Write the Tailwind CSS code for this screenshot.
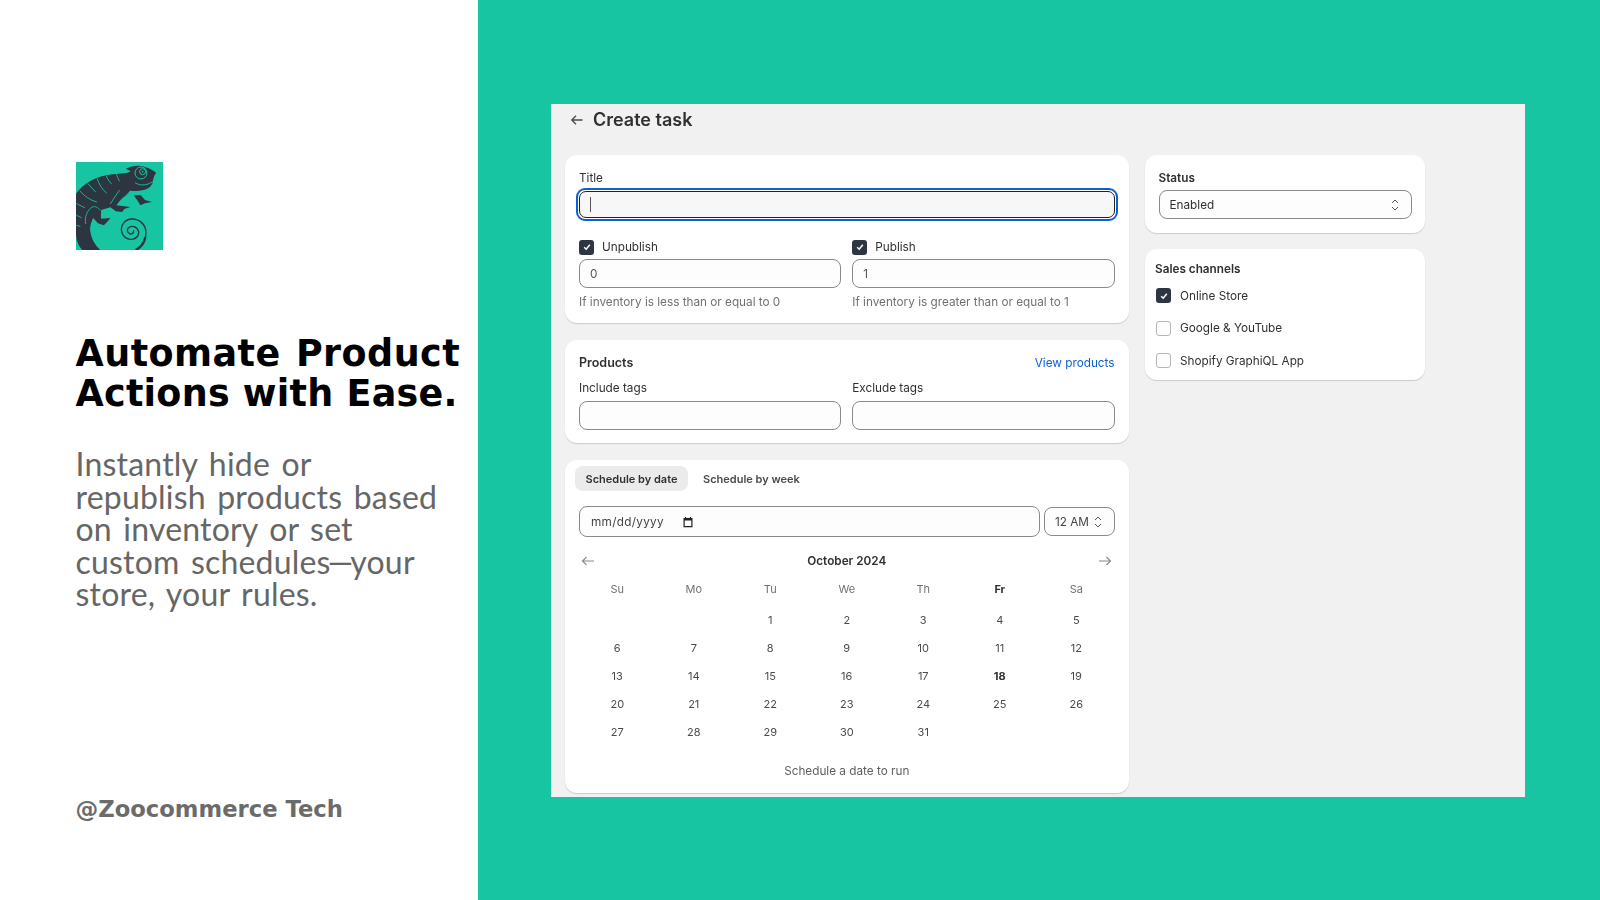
<!DOCTYPE html>
<html><head><meta charset="utf-8"><script src="https://cdn.jsdelivr.net/npm/@tailwindcss/browser@4"></script></head>
<body class="m-0">
<div class="flex w-[1600px] h-[900px] overflow-hidden font-['Inter',sans-serif] bg-white">
  <aside class="w-[477.5px] shrink-0 bg-white pl-[75.5px] flex flex-col">
    <svg class="mt-[162px] w-[87.5px] h-[88px] shrink-0" viewBox="0 0 264 264" preserveAspectRatio="none">
      <rect width="264" height="264" fill="#17c5a3"/>
      <path fill="#2d3540" d="M0 95C22 65 60 42 110 37L146 34C154 33 160 31 165 28L150 20C165 13 180 10 195 12C213 14 230 24 242 32C236 40 232 50 232 60C228 72 220 80 204 84C190 88 176 88 164 86C158 96 146 106 134 114L122 130L164 135L146 141L139 150L120 148L104 136L76 144C76 152 74 162 76 170L104 168L94 180L84 190L66 184L52 168C46 180 40 196 44 212C48 234 60 252 74 264L19 264C6 250 0 232 0 215Z"/>
      <path fill="#2d3540" d="M174 100L196 100L208 114L229 120L208 124L194 130L186 116Z"/>
      <g fill="none" stroke="#17c5a3" stroke-width="2.6" stroke-linecap="round">
        <path d="M179 63C194 72 218 72 236 55"/><path d="M36 65L59 90M64 50C70 68 80 84 92 93M92 43C96 52 100 60 107 65M122 35C124 44 127 50 131 57M12 87C24 102 42 114 62 120M2 125L26 137M2 160L16 167M2 190L12 193"/>
        <path d="M131 85C122 98 112 112 104 125M164 87C156 96 148 104 139 110"/>
        <path d="M29 185C26 165 32 146 49 135C58 132 66 135 72 144"/>
      </g>
      <circle cx="196" cy="33" r="18" fill="#2d3540" stroke="#17c5a3" stroke-width="3"/><circle cx="201" cy="29" r="9" fill="none" stroke="#17c5a3" stroke-width="3"/><circle cx="201" cy="29" r="2.5" fill="#17c5a3"/>
      <path fill="none" stroke="#2d3540" stroke-width="4" stroke-linecap="round" d="M182 264C200 254 212 236 211 210C210 186 190 170 168 171C148 172 136 188 137 204C138 222 154 234 170 232C184 230 192 218 188 206C184 194 170 190 160 196C152 202 154 214 164 216C170 216 174 212 174 206"/>
      <path fill="none" stroke="#2d3540" stroke-width="7" d="M180 264C196 256 206 242 209 226"/>
    </svg>
    <h1 class="mt-[84px] text-[36.5px] leading-[40px] font-bold font-['DejaVu_Sans',sans-serif] text-black tracking-[0.45px] whitespace-nowrap"><span class="[word-spacing:2px]">Automate Product</span><br><span class="tracking-[0.25px]">Actions with Ease.</span></h1>
    <p class="mt-[34px] text-[32px] leading-[32.5px] font-['Lato',sans-serif] text-[#666] tracking-[0.2px] [word-spacing:3px] whitespace-nowrap">Instantly hide or<br>republish products based<br>on inventory or set<br>custom schedules<span class="-mx-[3px]">—</span>your<br>store, your rules.</p>
    <div class="mt-[182px] text-[22.7px] leading-[32px] font-bold font-['DejaVu_Sans',sans-serif] text-[#6b6b6b] whitespace-nowrap">@Zoocommerce Tech</div>
  </aside>
  <main class="flex-1 bg-[#17c5a3] pl-[73.5px] pt-[104px]">
    <div class="w-[974px] h-[693px] bg-[#f1f1f1] px-[14px] overflow-hidden text-[11.75px] leading-[16px] text-[#303030] blur-[0.3px]">
      <div class="h-[32px] flex items-center pl-[5px] gap-[9px]">
        <svg class="w-[14px] h-[14px]" viewBox="0 0 14 14" fill="none" stroke="#4a4a4a" stroke-width="1.3"><path d="M12.5 7H1.8M6 2.8L1.8 7 6 11.2"/></svg>
        <span class="text-[18px] leading-[24px] font-semibold">Create task</span>
      </div>
      <div class="mt-[19px] flex gap-[16.5px] items-start">
        <div class="w-[563.5px] shrink-0 flex flex-col gap-[17px]">
          <section class="bg-white rounded-[12px] shadow-[0_1px_1px_rgba(0,0,0,0.16)] h-[168px] px-[14px] pt-[15px]">
            <div class="h-[16px]">Title</div>
            <div class="mt-[2px] mx-[-3px] h-[33px] rounded-[9px] border-2 border-[#0f5fd0] p-[1px]">
              <div class="h-full rounded-[7px] border border-[#222] bg-[#f7f7f7] flex items-center pl-[10px]"><span class="w-[1px] h-[15px] bg-[#555]"></span></div>
            </div>
            <div class="mt-[17px] grid grid-cols-2 gap-x-[11px]">
              <div>
                <div class="flex items-center gap-[8px] h-[18px]"><span class="w-[15px] h-[15px] rounded-[3px] bg-[#2d3540] flex items-center justify-center"><svg class="w-[10px] h-[10px]" viewBox="0 0 10 10" fill="none" stroke="#fff" stroke-width="1.5"><path d="M2.2 5.2L4.2 7.2 7.8 2.8"/></svg></span>Unpublish</div>
                <div class="mt-[3px] h-[29px] rounded-[8px] border border-[#8a8a8a] bg-[#fdfdfd] flex items-center pl-[10px] text-[#555]">0</div>
                <div class="mt-[5.5px] text-[#6d7175]">If inventory is less than or equal to 0</div>
              </div>
              <div>
                <div class="flex items-center gap-[8px] h-[18px]"><span class="w-[15px] h-[15px] rounded-[3px] bg-[#2d3540] flex items-center justify-center"><svg class="w-[10px] h-[10px]" viewBox="0 0 10 10" fill="none" stroke="#fff" stroke-width="1.5"><path d="M2.2 5.2L4.2 7.2 7.8 2.8"/></svg></span>Publish</div>
                <div class="mt-[3px] h-[29px] rounded-[8px] border border-[#8a8a8a] bg-[#fdfdfd] flex items-center pl-[10px] text-[#555]">1</div>
                <div class="mt-[5.5px] text-[#6d7175]">If inventory is greater than or equal to 1</div>
              </div>
            </div>
          </section>
          <section class="bg-white rounded-[12px] shadow-[0_1px_1px_rgba(0,0,0,0.16)] h-[103px] px-[14px] pt-[15px]">
            <div class="flex justify-between items-center h-[16px]"><span class="font-semibold text-[12.5px]">Products</span><span class="text-[#0f5fd0]">View products</span></div>
            <div class="mt-[9px] grid grid-cols-2 gap-x-[11px]">
              <div><div class="h-[16px]">Include tags</div><div class="mt-[5px] h-[29px] rounded-[8px] border border-[#8a8a8a] bg-[#fdfdfd]"></div></div>
              <div><div class="h-[16px]">Exclude tags</div><div class="mt-[5px] h-[29px] rounded-[8px] border border-[#8a8a8a] bg-[#fdfdfd]"></div></div>
            </div>
          </section>
          <section class="bg-white rounded-[12px] shadow-[0_1px_1px_rgba(0,0,0,0.16)] h-[333px] px-[14px] pt-[6px]">
            <div class="flex items-center h-[25px] -ml-[4px] text-[11px] font-semibold">
              <span class="h-[25px] w-[113px] rounded-[8px] bg-[#ebebeb] flex items-center justify-center">Schedule by date</span>
              <span class="ml-[15px] text-[#4a4a4a]">Schedule by week</span>
            </div>
            <div class="mt-[15px] flex items-center gap-[4px]">
              <div class="flex-1 h-[31px] rounded-[8px] border border-[#8a8a8a] bg-[#fdfdfd] flex items-center pl-[11px] text-[#444]"><span class="tracking-[0.3px]">mm/dd/yyyy</span>
                <svg class="ml-[18px] w-[12px] h-[12px]" viewBox="0 0 12 12"><path fill="#222" d="M1.5 2H3V1h1.2v1h3.6V1H9v1h1.5v9.2h-9zM2.7 4.6v5.4h6.6V4.6z"/></svg>
              </div>
              <div class="w-[70.5px] h-[29px] rounded-[8px] border border-[#8a8a8a] bg-[#fdfdfd] flex items-center pl-[10px] text-[#444]">12 AM
                <svg class="ml-[4px] w-[10px] h-[14px]" viewBox="0 0 10 14" fill="none" stroke="#555" stroke-width="1"><path d="M2 5L5 2l3 3M2 9l3 3 3-3"/></svg>
              </div>
            </div>
            <div class="mt-[15.5px] flex justify-between items-center h-[16px] px-[2px] font-semibold">
              <svg class="w-[14px] h-[14px]" viewBox="0 0 14 14" fill="none" stroke="#8a8a8a" stroke-width="1.1"><path d="M13 7H1.5M5.5 3L1.5 7l4 4"/></svg>
              <span>October 2024</span>
              <svg class="w-[14px] h-[14px]" viewBox="0 0 14 14" fill="none" stroke="#8a8a8a" stroke-width="1.1"><path d="M1 7h11.5M8.5 3l4 4-4 4"/></svg>
            </div>
            <div class="mt-[12.5px] grid grid-cols-7 text-center text-[11px] text-[#6d7175] h-[16px] leading-[16px]">
              <span>Su</span><span>Mo</span><span>Tu</span><span>We</span><span>Th</span><span class="font-bold text-[#303030]">Fr</span><span>Sa</span>
            </div>
            <div class="mt-[9px] grid grid-cols-7 auto-rows-[28px] text-center text-[11px] leading-[28px] text-[#4a4a4a]">
              <span></span><span></span><span>1</span><span>2</span><span>3</span><span>4</span><span>5</span>
              <span>6</span><span>7</span><span>8</span><span>9</span><span>10</span><span>11</span><span>12</span>
              <span>13</span><span>14</span><span>15</span><span>16</span><span>17</span><span class="font-bold text-[#303030]">18</span><span>19</span>
              <span>20</span><span>21</span><span>22</span><span>23</span><span>24</span><span>25</span><span>26</span>
              <span>27</span><span>28</span><span>29</span><span>30</span><span>31</span><span></span><span></span>
            </div>
            <div class="mt-[17px] text-center text-[#5c5f62]">Schedule a date to run</div>
          </section>
        </div>
        <div class="w-[280px] shrink-0 flex flex-col gap-[16px]">
          <section class="bg-white rounded-[12px] shadow-[0_1px_1px_rgba(0,0,0,0.16)] h-[78px] px-[13.5px] pt-[15px]">
            <div class="h-[16px] font-semibold">Status</div>
            <div class="mt-[4px] h-[29px] rounded-[8px] border border-[#8a8a8a] bg-[#fdfdfd] flex items-center justify-between pl-[10px] pr-[11px]">Enabled
              <svg class="w-[10px] h-[14px]" viewBox="0 0 10 14" fill="none" stroke="#555" stroke-width="1"><path d="M2 5L5 2l3 3M2 9l3 3 3-3"/></svg>
            </div>
          </section>
          <section class="bg-white rounded-[12px] shadow-[0_1px_1px_rgba(0,0,0,0.16)] h-[131px] px-[10px] pt-[12px]">
            <div class="h-[16px] font-semibold">Sales channels</div>
            <div class="mt-[11px] flex flex-col gap-[17.5px] pl-[1px]">
              <div class="flex items-center gap-[9px] h-[15px]"><span class="w-[15px] h-[15px] rounded-[3px] bg-[#2d3540] flex items-center justify-center"><svg class="w-[10px] h-[10px]" viewBox="0 0 10 10" fill="none" stroke="#fff" stroke-width="1.5"><path d="M2.2 5.2L4.2 7.2 7.8 2.8"/></svg></span>Online Store</div>
              <div class="flex items-center gap-[9px] h-[15px]"><span class="w-[15px] h-[15px] rounded-[3px] border border-[#b5b5b5] bg-[#fdfdfd]"></span>Google &amp; YouTube</div>
              <div class="flex items-center gap-[9px] h-[15px]"><span class="w-[15px] h-[15px] rounded-[3px] border border-[#b5b5b5] bg-[#fdfdfd]"></span>Shopify GraphiQL App</div>
            </div>
          </section>
        </div>
      </div>
    </div>
  </main>
</div>
</body></html>
